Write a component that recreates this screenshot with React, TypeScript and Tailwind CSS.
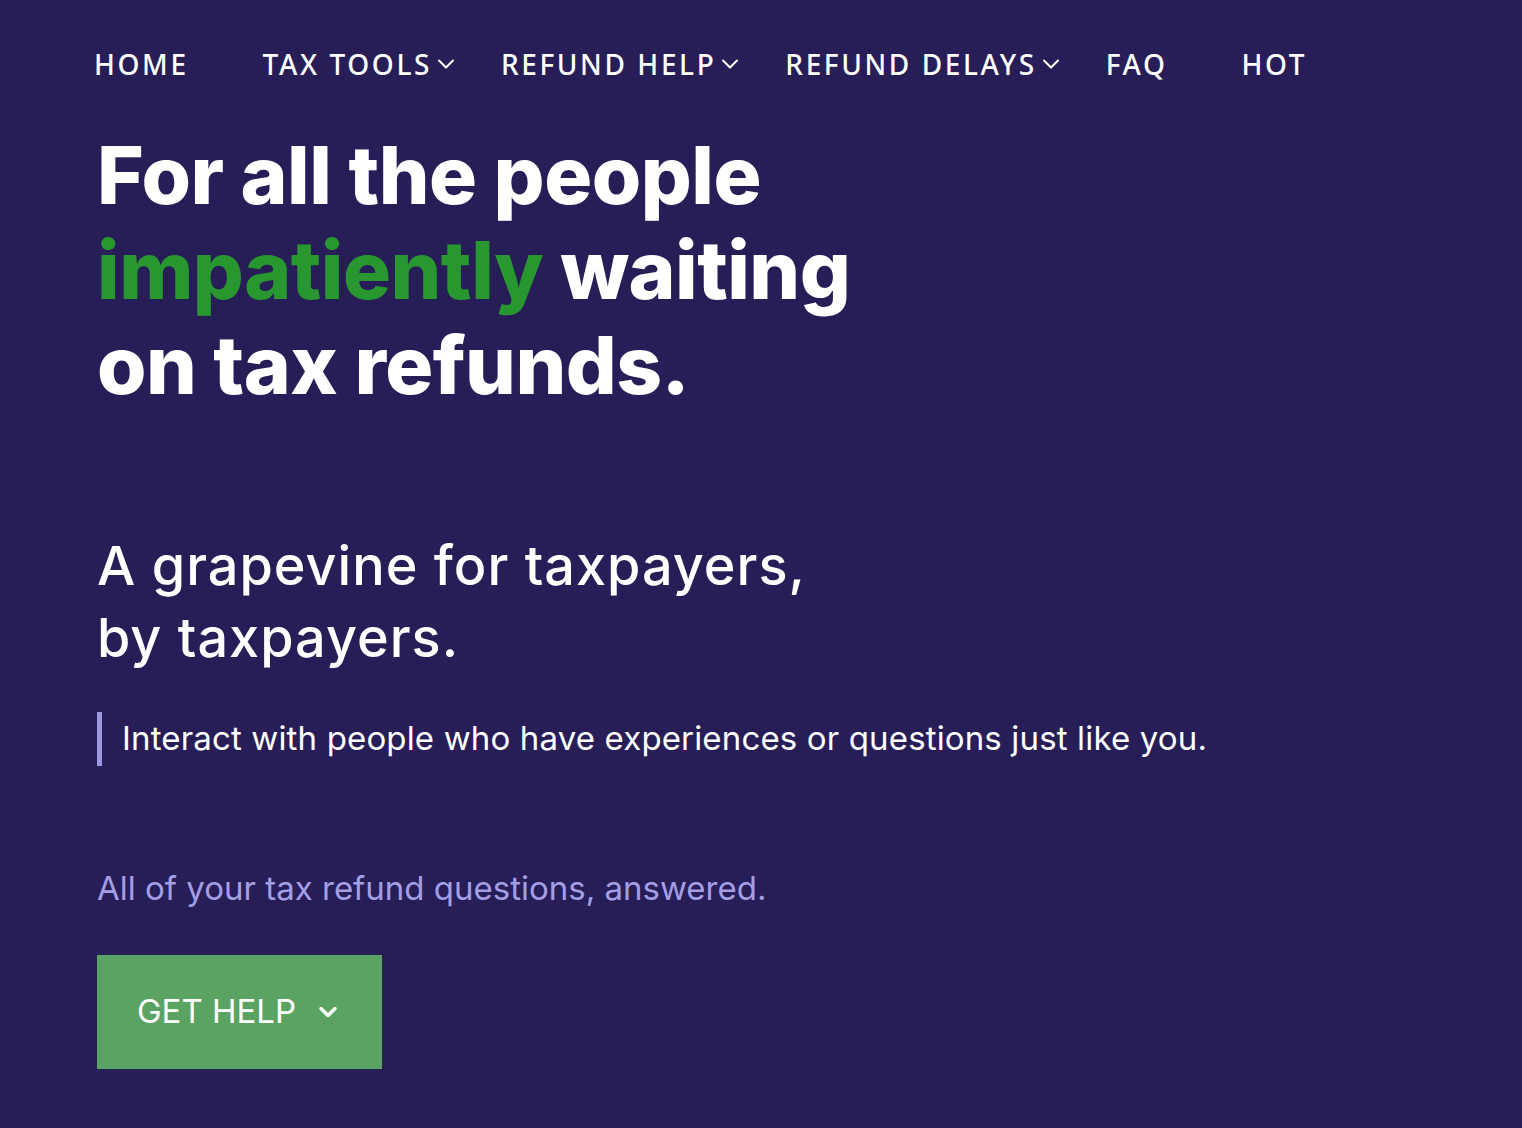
import { ChevronDown } from "lucide-react";

const navItems = [
    { label: "HOME", menu: false },
    { label: "TAX TOOLS", menu: true },
    { label: "REFUND HELP", menu: true },
    { label: "REFUND DELAYS", menu: true },
    { label: "FAQ", menu: false },
    { label: "HOT", menu: false },
];

export default function App() {
    return (
        <div className="min-h-screen w-full bg-[#271e58] text-white" style={{ fontFamily: "Inter, sans-serif" }}>
            {/* top nav */}
            <nav className="h-[131px] border-b border-[#231a50] pl-[94px] flex items-center">
                <ul className="flex items-center gap-[41px] pb-[3px]">
                    {navItems.map((item) => (
                        <li
                            key={item.label}
                            className={`flex items-center text-[28px] tracking-[2.6px] font-medium ${item.menu ? "" : "pr-[33px]"}`}
                            style={{ fontFamily: "'Noto Sans', sans-serif" }}
                        >
                            {item.label}
                            {item.menu && <ChevronDown className="w-[28px] h-[28px]" strokeWidth={1.8} />}
                        </li>
                    ))}
                </ul>
            </nav>

            <main className="pl-[97px]">
                <h1
                    className="text-[80px] leading-[95px] font-extrabold tracking-[-0.5px] -mt-[4px]"
                    style={{ fontFamily: "Inter, 'Noto Sans', sans-serif" }}
                >
                    For all the people<br />
                    <span className="text-[#28972f]">impatiently</span> waiting<br />
                    on tax refunds.
                </h1>

                <h2 className="mt-[118px] text-[54px] leading-[72px] font-medium tracking-[1px]">
                    A grapevine for taxpayers,<br />
                    by taxpayers.
                </h2>

                <div className="mt-[38px] border-l-[5px] border-[#9d98e0] pl-[20px] h-[54px] flex items-center">
                    <p className="text-[33px] tracking-[0.15px]">
                        Interact with people who have experiences or questions just like you.
                    </p>
                </div>

                <p className="mt-[98px] text-[33px] text-[#a49ee4]">
                    All of your tax refund questions, answered.
                </p>

                <button className="mt-[41px] w-[285px] h-[114px] bg-[#5aa362] flex items-center justify-center gap-[18px] text-[33px]">
                    GET HELP
                    <ChevronDown className="w-[28px] h-[28px]" strokeWidth={3} />
                </button>
            </main>
        </div>
    );
}
